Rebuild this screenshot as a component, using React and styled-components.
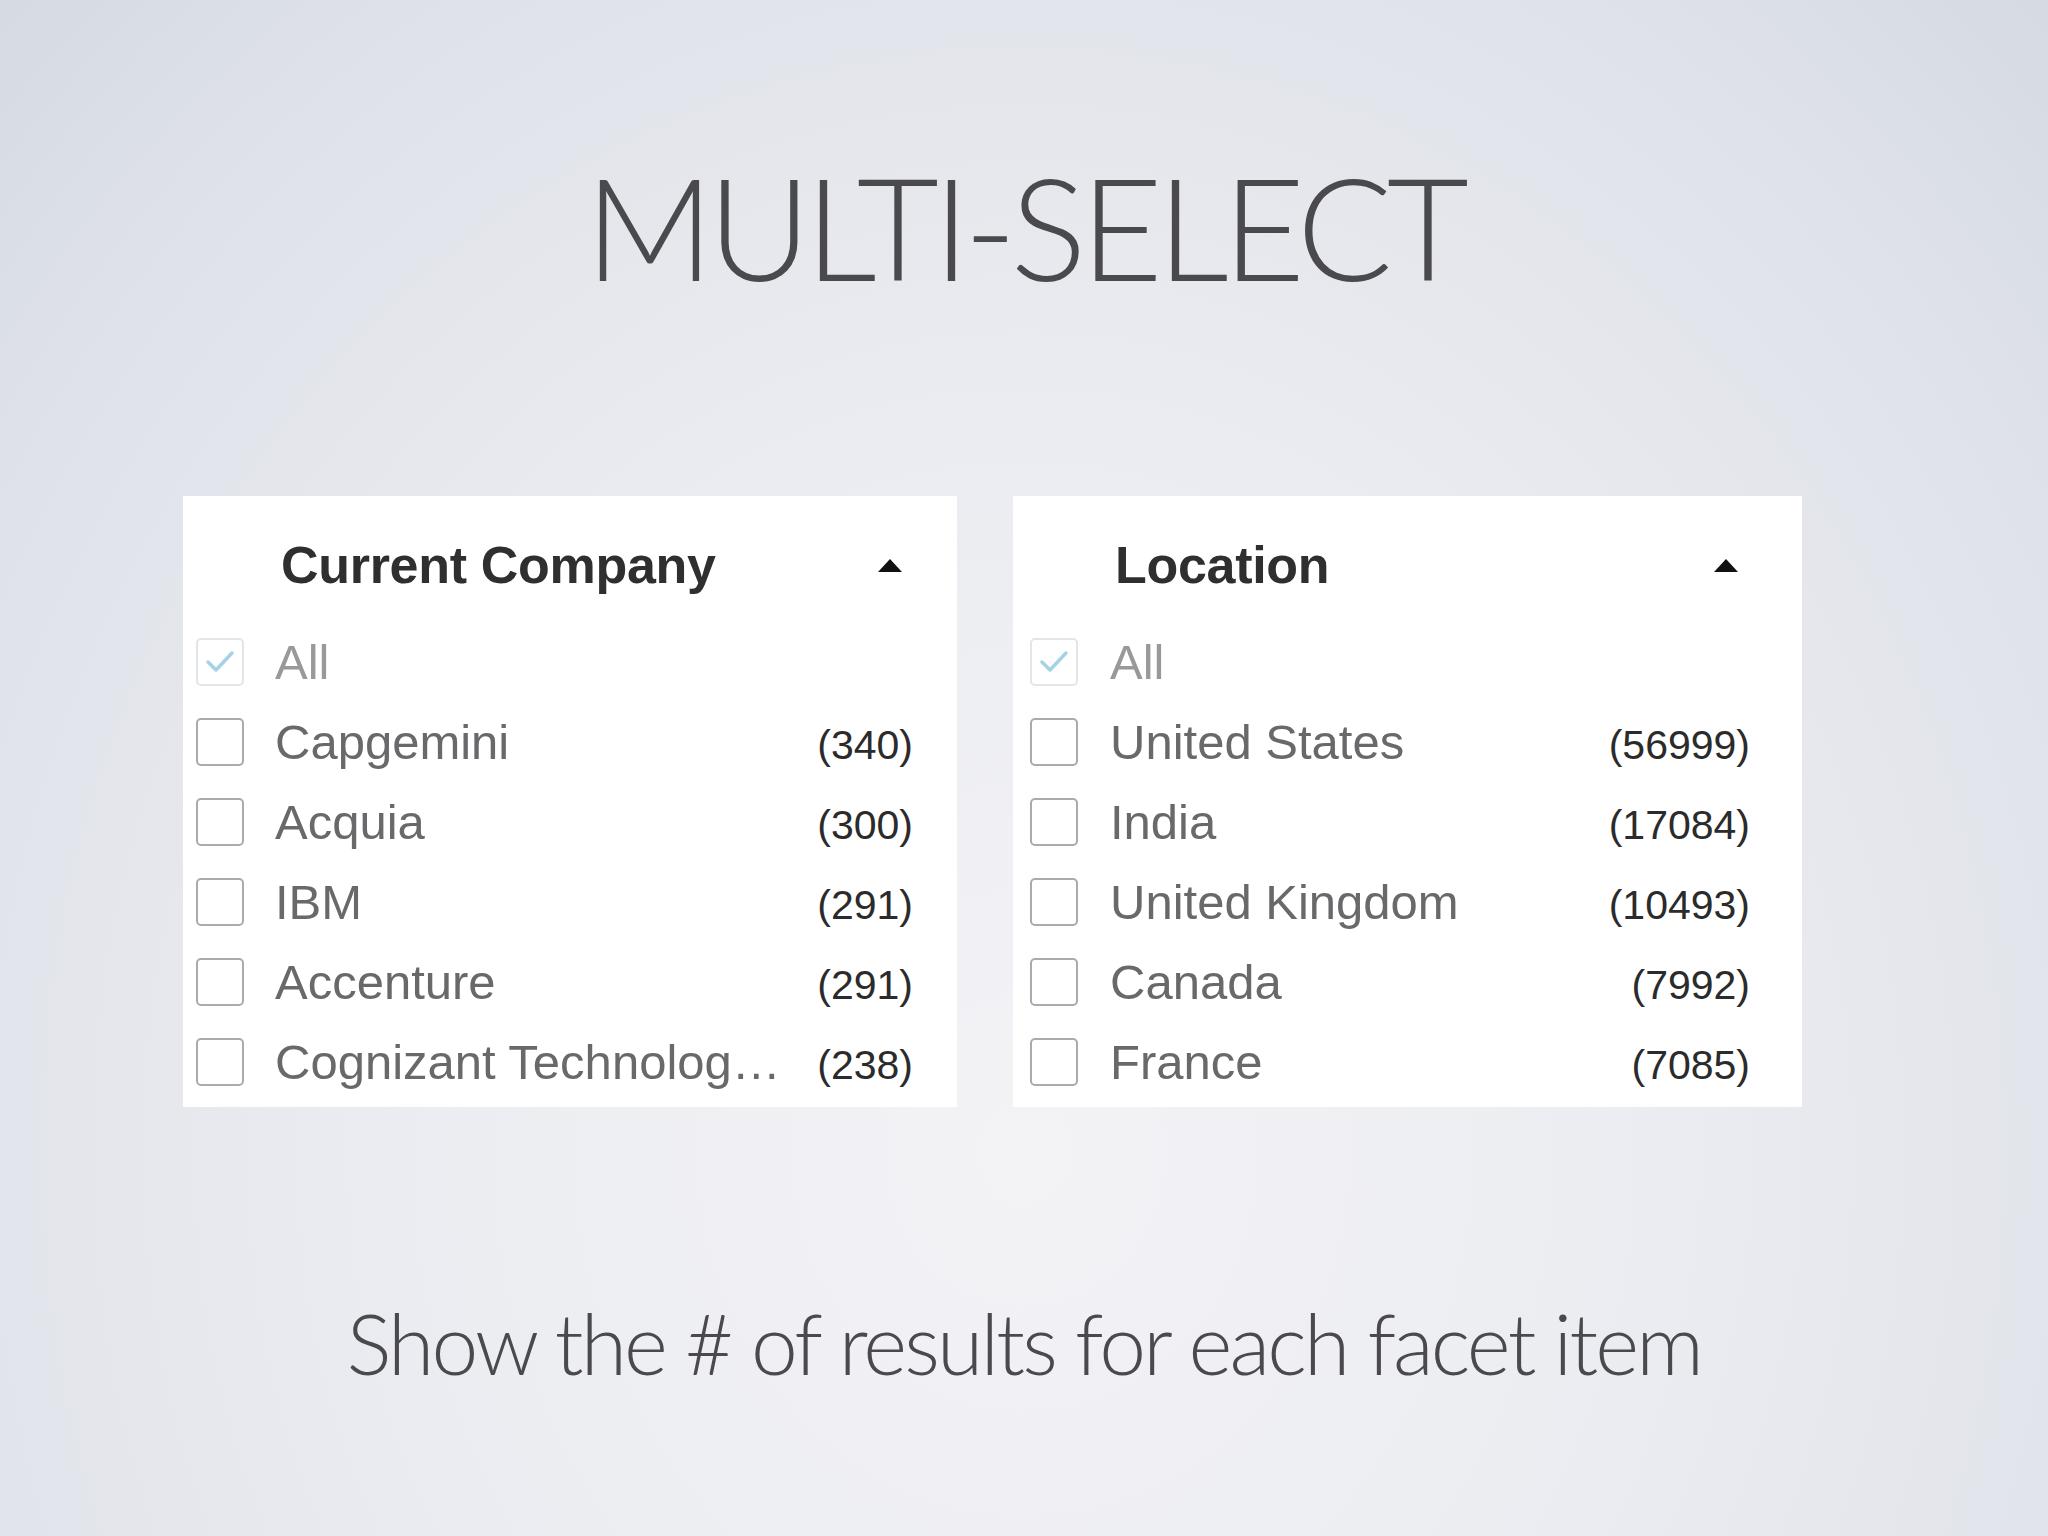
import React from "react";
import styled, { createGlobalStyle } from "styled-components";

const GlobalStyle = createGlobalStyle`
  html, body {
    margin: 0;
    padding: 0;
  }
  body {
    font-family: "Liberation Sans", Arial, sans-serif;
  }
`;

const facets = [
  {
    title: "Current Company",
    width: 774,
    inset: 13,
    headInset: 98,
    caretRight: 55,
    countRight: 44,
    items: [
      ["Capgemini", "(340)"],
      ["Acquia", "(300)"],
      ["IBM", "(291)"],
      ["Accenture", "(291)"],
      ["Cognizant Technolog…", "(238)"],
    ],
  },
  {
    title: "Location",
    width: 789,
    inset: 17,
    headInset: 102,
    caretRight: 64,
    countRight: 52,
    items: [
      ["United States", "(56999)"],
      ["India", "(17084)"],
      ["United Kingdom", "(10493)"],
      ["Canada", "(7992)"],
      ["France", "(7085)"],
    ],
  },
];

const Page = styled.div`
  width: 2048px;
  height: 1536px;
  box-sizing: border-box;
  display: flex;
  flex-direction: column;
  align-items: center;
  padding-top: 155px;
  background: radial-gradient(
    ellipse at 50% 75%,
    #f3f3f6 0%,
    #ebecf1 45%,
    #dfe2e9 80%,
    #d5dae3 100%
  );
  overflow: hidden;
`;

const Title = styled.h1`
  margin: 0;
  font-family: Lato, "Open Sans", sans-serif;
  font-weight: 300;
  font-size: 142px;
  line-height: 1;
  color: #4a4a4e;
  letter-spacing: -6px;
`;

const Panels = styled.div`
  align-self: stretch;
  display: flex;
  align-items: flex-start;
  gap: 56px;
  padding-left: 183px;
  margin-top: 199px;
`;

const Panel = styled.section`
  width: ${(p) => p.$width}px;
  box-sizing: border-box;
  background: #ffffff;
  padding: 39px ${(p) => p.$countRight}px 5px ${(p) => p.$inset}px;
`;

const Header = styled.div`
  display: flex;
  align-items: center;
  justify-content: space-between;
  height: 60px;
  margin-bottom: 27px;
  padding-left: ${(p) => p.$headInset - p.$inset}px;
  margin-right: ${(p) => p.$caretRight - p.$countRight}px;
`;

const Heading = styled.h2`
  margin: 0;
  font-size: 52px;
  line-height: 60px;
  font-weight: 700;
  letter-spacing: -0.3px;
  color: #2f2f30;
`;

const Caret = styled.span`
  width: 0;
  height: 0;
  border-left: 12px solid transparent;
  border-right: 12px solid transparent;
  border-bottom: 13px solid #111;
`;

const Row = styled.div`
  display: flex;
  align-items: center;
  height: 80px;
`;

const Box = styled.span`
  flex: none;
  width: 48px;
  height: 48px;
  box-sizing: border-box;
  border-radius: 5px;
  border: 2px solid ${(p) => (p.$checked ? "#e3e6e9" : "#ababab")};
  background: #fff;
  display: flex;
  align-items: center;
  justify-content: center;
  margin-right: ${(p) => p.$gap}px;
`;

const Label = styled.span`
  flex: 1;
  min-width: 0;
  white-space: nowrap;
  overflow: hidden;
  font-size: 49px;
  color: ${(p) => (p.$muted ? "#999999" : "#69696c")};
`;

const Count = styled.span`
  flex: none;
  padding-top: 6px;
  font-size: 41px;
  color: #2b2b2b;
`;

const Caption = styled.p`
  margin: 194px 0 0;
  font-family: Lato, "Open Sans", sans-serif;
  font-weight: 300;
  font-size: 84px;
  line-height: 1;
  letter-spacing: -2.8px;
  color: #4a4a4e;
`;

function Check() {
  return (
    <svg width="36" height="36" viewBox="0 0 36 36">
      <polyline
        points="6,18 14,26 30,9"
        fill="none"
        stroke="#a6d2e5"
        strokeWidth="3.5"
        strokeLinecap="round"
        strokeLinejoin="round"
      />
    </svg>
  );
}

function Facet({ facet }) {
  const gap = facet.inset === 13 ? 31 : 32;
  return (
    <Panel $width={facet.width} $inset={facet.inset} $countRight={facet.countRight}>
      <Header
        $headInset={facet.headInset}
        $inset={facet.inset}
        $caretRight={facet.caretRight}
        $countRight={facet.countRight}
      >
        <Heading>{facet.title}</Heading>
        <Caret />
      </Header>
      <Row>
        <Box $checked $gap={gap}>
          <Check />
        </Box>
        <Label $muted>All</Label>
      </Row>
      {facet.items.map(([name, count]) => (
        <Row key={name}>
          <Box $gap={gap} />
          <Label>{name}</Label>
          <Count>{count}</Count>
        </Row>
      ))}
    </Panel>
  );
}

export default function App() {
  return (
    <>
      <GlobalStyle />
      <Page>
        <Title>MULTI-SELECT</Title>
        <Panels>
          {facets.map((f) => (
            <Facet key={f.title} facet={f} />
          ))}
        </Panels>
        <Caption>Show the # of results for each facet item</Caption>
      </Page>
    </>
  );
}
